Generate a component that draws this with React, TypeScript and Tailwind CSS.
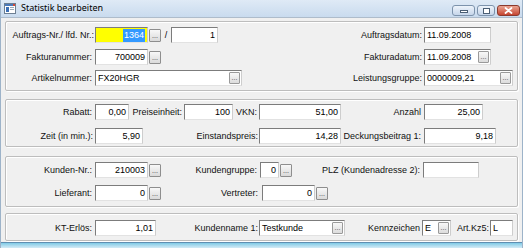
import React from "react";

type InpProps = {
  cls: string;
  children?: React.ReactNode;
  right?: boolean;
  yellow?: boolean;
  btn?: boolean;
};

function Inp({ cls, children, right, yellow, btn }: InpProps) {
  return (
    <div
      className={`flex h-[16px] shrink-0 items-center overflow-hidden border border-t-[#7c7c7c] border-l-[#7c7c7c] border-r-[#cdcdcd] border-b-[#e2e2e2] text-[9px] leading-none text-black ${
        yellow ? "bg-[#ffff00]" : "bg-white"
      } ${right ? "justify-end pr-[2px]" : "pl-[2px]"} ${cls}`}
    >
      {children}
      {btn && (
        <div className="ml-auto mr-[1px] flex h-[12px] w-[11px] shrink-0 items-end justify-center rounded-[1px] border border-[#9a9a9a] bg-gradient-to-b from-[#f8f8f8] to-[#dcdcdc] pb-[2px] text-[7px] leading-none text-[#444]">
          ...
        </div>
      )}
    </div>
  );
}

function Dots({ cls = "" }: { cls?: string }) {
  return (
    <div
      className={`flex h-[13px] w-[12px] shrink-0 items-end justify-center rounded-[1px] border border-[#8e8e8e] bg-gradient-to-b from-[#f8f8f8] to-[#dadada] pb-[2px] text-[7px] leading-none text-[#333] ${cls}`}
    >
      ...
    </div>
  );
}

function Label({ cls, children }: { cls: string; children: React.ReactNode }) {
  return (
    <div className={`shrink-0 whitespace-nowrap text-right text-[9px] leading-none text-[#111] ${cls}`}>
      {children}
    </div>
  );
}

function Group({ cls, children }: { cls: string; children: React.ReactNode }) {
  return (
    <div
      className={`flex shrink-0 flex-col rounded-[2px] border border-[#bdbdbd] shadow-[inset_1px_1px_0_#ffffff,1px_1px_0_#ffffff] ${cls}`}
    >
      {children}
    </div>
  );
}

function Row({ children, cls = "" }: { children: React.ReactNode; cls?: string }) {
  return <div className={`flex h-[16px] items-center ${cls}`}>{children}</div>;
}

export default function App() {
  return (
    <div className="flex h-[248px] w-[523px] flex-col overflow-hidden border-x border-[#9db3c9] bg-[#f0f0f0] font-['Liberation_Sans',Arial,sans-serif]">
      {/* Title bar */}
      <div className="flex h-[17px] shrink-0 items-start bg-gradient-to-b from-[#dfeaf6] to-[#c9dbee]">
        <svg className="ml-[3px] mt-[3px] shrink-0" width="12" height="11" viewBox="0 0 12 11">
          <rect x="0.5" y="0.5" width="11" height="10" fill="#ffffff" stroke="#6d7f93" />
          <rect x="1" y="1" width="10" height="2" fill="#4a79b8" />
          <rect x="2" y="4" width="3" height="5" fill="#3b6fb5" />
          <rect x="6" y="4" width="4" height="1" fill="#9aa9b8" />
          <rect x="6" y="6" width="4" height="1" fill="#9aa9b8" />
          <rect x="9" y="1" width="2" height="2" fill="#d04a3a" />
        </svg>
        <div className="ml-[5px] mt-[2px] whitespace-nowrap font-['Noto_Sans',sans-serif] text-[9px] leading-[12px] text-black">
          Statistik bearbeiten
        </div>
        <div className="ml-auto mr-[2px] mt-[5px] flex items-start">
          <div className="flex h-[11px] w-[23px] items-end justify-center rounded-[3px] border border-[#7d93ac] bg-gradient-to-b from-[#eef4fb] to-[#c6d6ea] pb-[2px]">
            <div className="h-[3px] w-[8px] border border-[#4a5e74] bg-white" />
          </div>
          <div className="ml-[2px] flex h-[11px] w-[18px] items-center justify-center rounded-[3px] border border-[#7d93ac] bg-gradient-to-b from-[#eef4fb] to-[#c6d6ea]">
            <div className="h-[6px] w-[7px] border border-[#4a5e74] bg-white" />
          </div>
          <div className="ml-[2px] flex h-[11px] w-[23px] items-center justify-center rounded-[3px] border border-[#8a3a2e] bg-gradient-to-b from-[#e9a493] to-[#c5432f]">
            <svg width="9" height="7" viewBox="0 0 9 7">
              <path d="M1.5 1 L7.5 6 M7.5 1 L1.5 6" stroke="#ffffff" strokeWidth="1.8" strokeLinecap="round" />
            </svg>
          </div>
        </div>
      </div>

      {/* Body */}
      <div className="flex flex-1 flex-col border-t border-[#aebccb] px-[4px]">
        {/* Group 1 */}
        <Group cls="mt-[3px] h-[70px] pt-[5px]">
          <Row>
            <Label cls="w-[89px] pr-[1px]">Auftrags-Nr./ lfd. Nr.:</Label>
            <Inp cls="w-[53px]" yellow right>
              <span className="flex h-[13px] items-center bg-[#3399ff] px-[1px] text-white">1364</span>
            </Inp>
            <Dots cls="ml-[1px]" />
            <div className="w-[10px] shrink-0 text-center text-[9px] leading-none">/</div>
            <Inp cls="w-[47px]" right>
              1
            </Inp>
            <Label cls="w-[206px] pr-[2px]">Auftragsdatum:</Label>
            <Inp cls="w-[67px]">11.09.2008</Inp>
          </Row>
          <Row cls="mt-[6px]">
            <Label cls="w-[89px] pr-[3px]">Fakturanummer:</Label>
            <Inp cls="w-[53px]" right>
              700009
            </Inp>
            <Dots cls="ml-[1px]" />
            <Label cls="w-[263px] pr-[2px]">Fakturadatum:</Label>
            <Inp cls="w-[67px]" btn>
              11.09.2008
            </Inp>
          </Row>
          <Row cls="mt-[5px]">
            <Label cls="w-[89px] pr-[3px]">Artikelnummer:</Label>
            <Inp cls="w-[147px]" btn>
              FX20HGR
            </Inp>
            <Label cls="w-[182px] pr-[2px]">Leistungsgruppe:</Label>
            <Inp cls="w-[89px]" btn>
              0000009,21
            </Inp>
          </Row>
        </Group>

        {/* Group 2 */}
        <Group cls="mt-[8px] h-[48px] pt-[4px]">
          <Row>
            <Label cls="w-[89px] pr-[3px]">Rabatt:</Label>
            <Inp cls="w-[34px]" right>
              0,00
            </Inp>
            <Label cls="w-[55px] pr-[2px]">Preiseinheit:</Label>
            <Inp cls="w-[49px]" right>
              100
            </Inp>
            <Label cls="w-[26px] pr-[2px]">VKN:</Label>
            <Inp cls="w-[82px]" right>
              51,00
            </Inp>
            <Label cls="w-[83px] pr-[3px]">Anzahl</Label>
            <Inp cls="w-[59px]" right>
              25,00
            </Inp>
          </Row>
          <Row cls="mt-[8px]">
            <Label cls="w-[89px] pr-[2px]">Zeit (in min.):</Label>
            <Inp cls="w-[48px]" right>
              5,90
            </Inp>
            <Label cls="w-[116px] pr-[1px]">Einstandspreis:</Label>
            <Inp cls="w-[82px]" right>
              14,28
            </Inp>
            <Label cls="w-[83px] pr-[3px]">Deckungsbeitrag 1:</Label>
            <Inp cls="w-[72px]" right>
              9,18
            </Inp>
          </Row>
        </Group>

        {/* Group 3 */}
        <Group cls="mt-[9px] h-[51px] pt-[5px]">
          <Row>
            <Label cls="w-[89px] pr-[3px]">Kunden-Nr.:</Label>
            <Inp cls="w-[53px]" right>
              210003
            </Inp>
            <Dots cls="ml-[1px]" />
            <Label cls="w-[99px] pr-[3px]">Kundengruppe:</Label>
            <Inp cls="w-[19px]" right>
              0
            </Inp>
            <Dots cls="ml-[1px]" />
            <Label cls="w-[131px] pr-[3px]">PLZ (Kundenadresse 2):</Label>
            <Inp cls="w-[56px]" />
          </Row>
          <Row cls="mt-[7px]">
            <Label cls="w-[89px] pr-[3px]">Lieferant:</Label>
            <Inp cls="w-[53px]" right>
              0
            </Inp>
            <Dots cls="ml-[1px]" />
            <Label cls="w-[101px] pr-[4px]">Vertreter:</Label>
            <Inp cls="w-[53px]" right>
              0
            </Inp>
            <Dots cls="ml-[1px]" />
          </Row>
        </Group>

        {/* Group 4 */}
        <Group cls="mt-[6px] h-[28px] pt-[6px]">
          <Row>
            <Label cls="w-[89px] pr-[3px]">KT-Erlös:</Label>
            <Inp cls="w-[61px]" right>
              1,01
            </Inp>
            <Label cls="w-[103px] pr-[1px]">Kundenname 1:</Label>
            <Inp cls="w-[86px]" btn>
              Testkunde
            </Inp>
            <Label cls="w-[77px] pr-[2px]">Kennzeichen</Label>
            <Inp cls="w-[29px]" btn>
              E
            </Inp>
            <Label cls="w-[39px] pr-[1px]">Art.Kz5:</Label>
            <Inp cls="w-[23px]">L</Inp>
          </Row>
        </Group>
      </div>

      {/* Bottom frame */}
      <div className="h-[6px] shrink-0 border-t border-[#5f8fb2] bg-gradient-to-b from-[#7fcbe6] to-[#d4ebf6]" />
    </div>
  );
}
